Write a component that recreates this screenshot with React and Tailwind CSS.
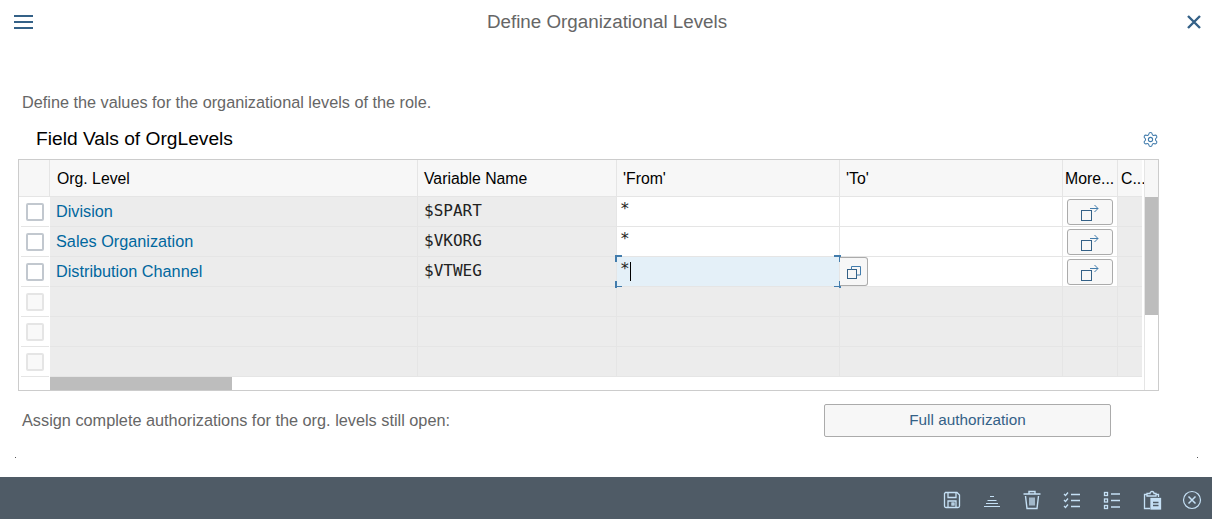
import React from "react";
import { Settings } from "lucide-react";

const font = "font-['Liberation_Sans',Arial,sans-serif]";

const colClass = "grid grid-cols-[31px_367px_1px_198px_1px_222px_1px_222px_1px_54px_1px_24px]";

const rows = [
  { level: "Division", variable: "$SPART", from: "*" },
  { level: "Sales Organization", variable: "$VKORG", from: "*" },
  { level: "Distribution Channel", variable: "$VTWEG", from: "*", focused: true },
  {},
  {},
  {},
];

const Sep = () => <div className="bg-[#e5e5e5]" />;

const Corner = ({ className }) => <span className={`absolute w-[7px] h-[7px] border-[#427cac] ${className}`} />;

const LaunchIcon = () => (
  <svg width="18" height="18" viewBox="0 0 18 18" fill="none" stroke="#346187" strokeWidth="1">
    <rect x="0.5" y="7.5" width="10" height="10" />
    <path d="M9 5.5H17M13.5 2L17 5.5L13.5 9" stroke="#427cac" />
  </svg>
);

const Row = ({ row }) => {
  const empty = !row.level;
  const line = "border-b border-[#e5e5e5]";
  return (
    <div className={`${colClass} h-[30px]`}>
      <div className="bg-white flex flex-col">
        <div className="flex-1 flex items-center justify-center pl-[1px] pr-[1px]">
          <div className={`w-[18px] h-[18px] border-2 rounded-[2px] ${empty ? "border-[#e5e5e5] bg-[#f9f9f9]" : "border-[#c2c8cf] bg-white"}`} />
        </div>
        <div className="h-[1px] ml-[2px] mr-[1px] bg-[#e5e5e5]" />
      </div>
      <div className={`bg-[#ececec] pl-[6px] flex items-center text-[16.25px] text-[#00679e] ${line}`}>{row.level}</div>
      <Sep />
      <div className={`bg-[#ececec] pl-[6px] pb-[2px] flex items-center text-[16px] text-[#222] font-['DejaVu_Sans_Mono',monospace] ${line}`}>{row.variable}</div>
      <Sep />
      <div className={`relative pl-[3px] flex items-start text-[16px] leading-[24px] text-[#222] font-['DejaVu_Sans_Mono',monospace] ${line} ${empty ? "bg-[#ececec]" : row.focused ? "bg-[#e4f0f8]" : "bg-white"}`}>
        {row.from}
        {row.focused && (
          <>
            <span className="w-[1px] h-[19px] bg-black mt-[5px]" />
            <Corner className="-left-[2px] -top-[2px] border-l-2 border-t-2" />
            <Corner className="-right-[2px] -top-[2px] border-r-2 border-t-2" />
            <Corner className="-left-[2px] -bottom-[2px] border-l-2 border-b-2" />
            <Corner className="-right-[2px] -bottom-[2px] border-r-2 border-b-2" />
            <button className="absolute left-[223px] top-0 w-[28px] h-[29px] bg-[#f7f7f7] border border-[#ababab] rounded-r-[3px] border-l-0 flex items-center justify-center">
              <svg width="16" height="16" viewBox="0 0 16 16" fill="none" stroke="#346187">
                <rect x="1.5" y="5.5" width="9" height="9" />
                <path d="M5.5 5.5V2.5H14.5V11H10.5" stroke="#427cac" />
              </svg>
            </button>
          </>
        )}
      </div>
      <Sep />
      <div className={`${line} ${empty ? "bg-[#ececec]" : "bg-white"}`} />
      <Sep />
      <div className={`flex items-center justify-center ${line} ${empty ? "bg-[#ececec]" : "bg-white"}`}>
        {!empty && (
          <button className="w-[46px] h-[26px] bg-[#f7f7f7] border border-[#ababab] rounded-[3px] flex items-center justify-center">
            <LaunchIcon />
          </button>
        )}
      </div>
      <Sep />
      <div className={`bg-[#ececec] ${line}`} />
    </div>
  );
};

const FooterIcons = () => (
  <div className="flex items-center gap-[20px] pr-[10px] pt-[4px]">
    <svg width="20" height="20" viewBox="0 0 20 20" fill="none" stroke="#c5e0f5" strokeWidth="1.3">
      <path d="M3.5 2.5H15L17.5 5V16a1.5 1.5 0 0 1-1.5 1.5H4A1.5 1.5 0 0 1 2.5 16V3.5z" />
      <path d="M6 2.5V7.5H14V2.5M6 17.5V11H14V17.5" />
      <rect x="10" y="13" width="2" height="2" />
    </svg>
    <svg width="20" height="20" viewBox="0 0 20 20" fill="none" stroke="#c5e0f5" strokeWidth="1.2">
      <path d="M8 6.5H12M5.5 10.5H14.5M4 13.5H16M2 16.5H18" />
    </svg>
    <svg width="20" height="20" viewBox="0 0 20 20" fill="none" stroke="#c5e0f5" strokeWidth="1.4">
      <path d="M1.5 4H18.5M7 3.5V1.5H13V3.5M3.5 6L5 18.5H15L16.5 6M8 7.5V15.5M10 7.5V15.5M12 7.5V15.5" />
    </svg>
    <svg width="20" height="20" viewBox="0 0 20 20" fill="none" stroke="#c5e0f5" strokeWidth="1.3">
      <path d="M2 4l1.5 1.5L6 2.5M2 10l1.5 1.5L6 8.5M2 16l1.5 1.5L6 14.5M9 4.5H18M9 10.5H18M9 16.5H18" />
    </svg>
    <svg width="20" height="20" viewBox="0 0 20 20" fill="none" stroke="#c5e0f5" strokeWidth="1.3">
      <rect x="2.5" y="2.5" width="3" height="3" />
      <rect x="2.5" y="9" width="3" height="3" />
      <rect x="2.5" y="15.5" width="3" height="3" />
      <path d="M9 4H18M9 10.5H18M9 17H18" />
    </svg>
    <svg width="20" height="20" viewBox="0 0 20 20" fill="none" stroke="#c5e0f5" strokeWidth="1.3">
      <path d="M8 18.5H2.5V4.5H5M14 4.5H16.5V7M5 3.5H8a2 2 0 0 1 4 0h2V6H5z" />
      <rect x="9" y="8.5" width="9.5" height="10.5" fill="#c5e0f5" />
      <path d="M11 12.5H16.5M11 15.5H16.5" stroke="#4f5b66" />
    </svg>
    <svg width="20" height="20" viewBox="0 0 20 20" fill="none" stroke="#c5e0f5" strokeWidth="1.2">
      <circle cx="10" cy="10" r="8.5" />
      <path d="M6.5 6.5L13.5 13.5M13.5 6.5L6.5 13.5" strokeWidth="1.5" />
    </svg>
  </div>
);

export default function App() {
  return (
    <div className={`${font} w-[1212px] h-[519px] flex flex-col bg-white overflow-hidden`}>
      <header className="h-[44px] flex items-center justify-between pl-[14px] pr-[10px]">
        <svg width="20" height="16" viewBox="0 0 20 16" fill="none" stroke="#346187" strokeWidth="2">
          <path d="M0 2H19M0 8H19M0 14H19" />
        </svg>
        <h1 className="text-[18.8px] text-[#666] pr-[6px]">Define Organizational Levels</h1>
        <svg width="16" height="16" viewBox="0 0 16 16" fill="none" stroke="#346187" strokeWidth="2.4">
          <path d="M2 2L14 14M14 2L2 14" />
        </svg>
      </header>

      <main className="flex-1 flex flex-col pl-[18px]">
        <p className="mt-[49px] ml-[4px] text-[16.25px] leading-[18px] text-[#666]">Define the values for the organizational levels of the role.</p>
        <div className="w-[1141px] mt-[14px] mb-[5px] h-[29px] flex items-center justify-between pl-[18px]">
          <h2 className="text-[19.2px] text-black">Field Vals of OrgLevels</h2>
          <Settings size={17} color="#427cac" strokeWidth={1.5} />
        </div>

        <div className="w-[1141px] h-[232px] border border-[#cccccc] flex">
          <div className="flex flex-col">
            <div className={`${colClass} h-[37px] pt-[0px] bg-[#f7f7f7] border-b border-[#e5e5e5] text-[15.8px] leading-[38px] text-black`}>
              <div className="border-r border-[#e5e5e5]" />
              <div className="pl-[7px]">Org. Level</div>
              <Sep />
              <div className="pl-[6px]">Variable Name</div>
              <Sep />
              <div className="pl-[6px]">'From'</div>
              <Sep />
              <div className="pl-[6px]">'To'</div>
              <Sep />
              <div className="pl-[2px]">More...</div>
              <Sep />
              <div className="pl-[3px]">C...</div>
            </div>
            {rows.map((row, i) => (
              <Row key={i} row={row} />
            ))}
            <div className="h-[13px] flex">
              <div className="w-[31px]" />
              <div className="w-[182px] bg-[#bdbdbd]" />
            </div>
          </div>
          <div className="w-[2px]" />
          <div className="w-[14px] flex flex-col border-l border-[#e5e5e5]">
            <div className="h-[37px] bg-[#f7f7f7]" />
            <div className="h-[118px] bg-[#bdbdbd]" />
          </div>
        </div>

        <div className="w-[1093px] mt-[13px] h-[33px] flex items-center justify-between pl-[4px]">
          <span className="text-[16.3px] text-[#666]">Assign complete authorizations for the org. levels still open:</span>
          <button className="w-[287px] h-[33px] bg-[#f7f7f7] border border-[#ababab] rounded-[2px] text-[15.3px] text-[#346187]">Full authorization</button>
        </div>

        <div className="w-[1183px] -ml-[3px] mt-[20px] flex justify-between">
          <span className="w-[1px] h-[1px] bg-[#555]" />
          <span className="w-[1px] h-[1px] bg-[#555]" />
        </div>
      </main>

      <footer className="h-[42px] bg-[#4f5b66] flex items-center justify-end">
        <FooterIcons />
      </footer>
    </div>
  );
}
